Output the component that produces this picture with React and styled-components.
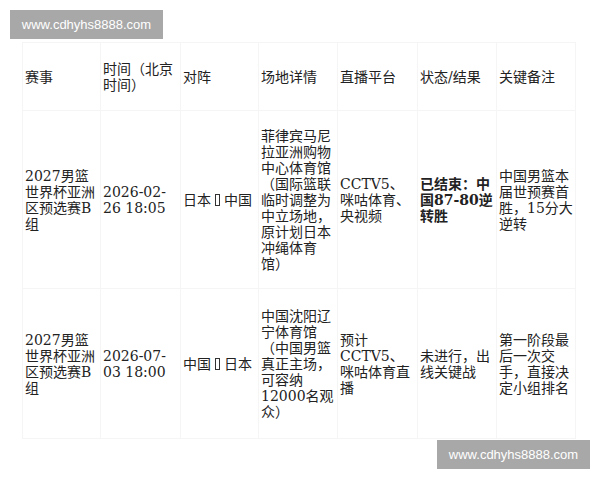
import styled, { createGlobalStyle } from "styled-components";

const GlobalStyle = createGlobalStyle`
  html, body {
    margin: 0;
    padding: 0;
    background: #fff;
  }
`;

const Page = styled.div`
  position: relative;
  width: 600px;
  height: 480px;
  overflow: hidden;
  background: #fff;
  padding: 42px 0 0 22px;
  box-sizing: border-box;
`;

const Table = styled.table`
  table-layout: fixed;
  width: 553px;
  border-collapse: collapse;
  font-family: "DejaVu Serif", "Noto Sans CJK SC", serif;
  font-size: 14px;
  line-height: 16px;
  color: #222;
`;

const Row = styled.tr`
  height: ${(p) => p.h}px;
`;

const Cell = styled.td`
  border: 1px solid #f5f5f5;
  padding: 0 0 0 2px;
  vertical-align: middle;
  text-align: left;
  font-weight: ${(p) => (p.bold ? 700 : 400)};
  white-space: ${(p) => (p.nowrap ? "nowrap" : "normal")};
`;

const HeadCell = styled(Cell).attrs({ as: "th" })`
  font-weight: 400;
`;

// the "vs" mark shows as a missing-glyph box in the screenshot
const Tofu = styled.span`
  display: inline-block;
  width: 5px;
  height: 12px;
  border: 1px solid #333;
  box-sizing: border-box;
  margin: 0 4px;
  vertical-align: -1px;
`;

const Watermark = styled.div`
  position: absolute;
  ${(p) => p.pos}
  width: 153px;
  height: 29px;
  background: #a8a8a8;
  color: #fff;
  font-family: "Liberation Sans", Arial, sans-serif;
  font-size: 13px;
  display: flex;
  align-items: center;
  justify-content: center;
`;

const widths = [78, 80, 78, 79, 80, 79, 79];
const heads = ["赛事", "时间（北京时间）", "对阵", "场地详情", "直播平台", "状态/结果", "关键备注"];

const rows = [
  {
    h: 178,
    cells: [
      "2027男篮世界杯亚洲区预选赛B组",
      "2026-02-26 18:05",
      ["日本", "中国"],
      "菲律宾马尼拉亚洲购物中心体育馆（国际篮联临时调整为中立场地，原计划日本冲绳体育馆）",
      "CCTV5、咪咕体育、央视频",
      "已结束：中国87-80逆转胜",
      "中国男篮本届世预赛首胜，15分大逆转",
    ],
    bold: 5,
  },
  {
    h: 150,
    cells: [
      "2027男篮世界杯亚洲区预选赛B组",
      "2026-07-03 18:00",
      ["中国", "日本"],
      "中国沈阳辽宁体育馆（中国男篮真正主场，可容纳12000名观众）",
      "预计CCTV5、咪咕体育直播",
      "未进行，出线关键战",
      "第一阶段最后一次交手，直接决定小组排名",
    ],
    bold: -1,
  },
];

export default function App() {
  return (
    <>
      <GlobalStyle />
      <Page>
        <Table>
          <colgroup>
            {widths.map((w, i) => (
              <col key={i} style={{ width: w }} />
            ))}
          </colgroup>
          <thead>
            <Row h={68}>
              {heads.map((t) => (
                <HeadCell key={t}>{t}</HeadCell>
              ))}
            </Row>
          </thead>
          <tbody>
            {rows.map((r, ri) => (
              <Row key={ri} h={r.h}>
                {r.cells.map((c, ci) =>
                  Array.isArray(c) ? (
                    <Cell key={ci} nowrap>
                      {c[0]}
                      <Tofu />
                      {c[1]}
                    </Cell>
                  ) : (
                    <Cell key={ci} bold={ci === r.bold}>
                      {c}
                    </Cell>
                  )
                )}
              </Row>
            ))}
          </tbody>
        </Table>
        <Watermark pos="top: 10px; left: 10px;">www.cdhyhs8888.com</Watermark>
        <Watermark pos="top: 440px; left: 437px;">www.cdhyhs8888.com</Watermark>
      </Page>
    </>
  );
}
